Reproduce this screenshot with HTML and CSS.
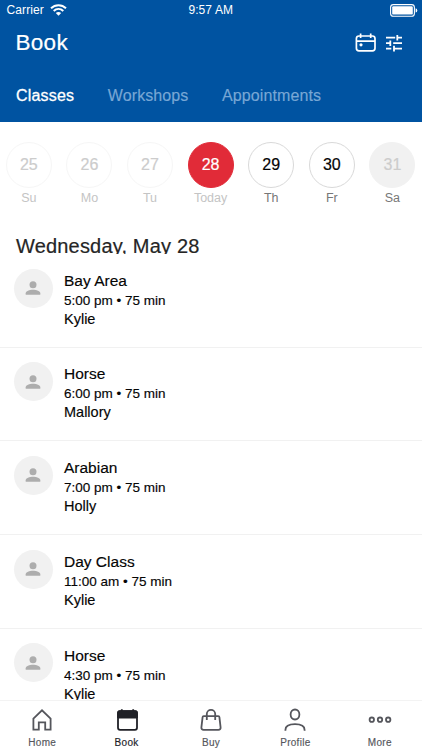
FILE: index.html
```html
<!DOCTYPE html>
<html lang="en">
<head>
<meta charset="utf-8">
<title>Book</title>
<link rel="stylesheet" href="styles.css">
</head>
<body>
<div class="app">
  <header class="header">
    <div class="status">
      <div class="carrier"><span>Carrier</span>
        <svg width="17" height="12" viewBox="0 0 17 12" fill="none" stroke="#fff" stroke-width="2"><path d="M1 4.2C5.2.1 11.8.1 16 4.2M3.7 6.9c2.8-2.6 6.8-2.6 9.6 0"/><path d="M5.8 9.1c1.6-1.4 3.8-1.4 5.4 0L8.5 11.8z" fill="#fff" stroke="none"/></svg>
      </div>
      <span class="clock">9:57 AM</span>
      <svg class="battery" width="28" height="13" viewBox="0 0 28 13"><rect x=".6" y=".6" width="23.8" height="11.6" rx="2.8" fill="none" stroke="#fff" stroke-width="1.1"/><rect x="2.2" y="2.2" width="20.6" height="8.4" rx="1.2" fill="#fff"/><path d="M25.6 4.2q1.7.5 1.7 2.2t-1.7 2.2z" fill="#fff"/></svg>
    </div>
    <div class="titlebar">
      <h1>Book</h1>
      <div class="actions">
        <svg width="22" height="20" viewBox="0 0 22 20" fill="none" stroke="#fff" stroke-width="1.7"><rect x="1.4" y="3" width="18.6" height="14.9" rx="2.6"/><path d="M1.4 8.2H20M5.6.5v4.6M15.7.5v4.6"/><circle cx="6" cy="11.8" r="1.6" fill="#fff" stroke="none"/></svg>
        <svg width="18" height="18" viewBox="0 0 18 18" fill="none" stroke="#fff" stroke-width="1.8"><path d="M1 3.7h9.2M13.2 3.7H17M12.3.9v5.6M1 9.2h4.5M8.2 9.2H17M5.3 6.4V12M1 14.6h5.3M9 14.6h8M9 11.8v5.6"/></svg>
      </div>
    </div>
    <nav class="tabs"><a class="tab active">Classes</a><a class="tab">Workshops</a><a class="tab wide">Appointments</a></nav>
  </header>
  <section class="dates">
    <div class="day past"><b>25</b><span>Su</span></div>
    <div class="day past"><b>26</b><span>Mo</span></div>
    <div class="day past"><b>27</b><span>Tu</span></div>
    <div class="day today"><b>28</b><span>Today</span></div>
    <div class="day"><b>29</b><span>Th</span></div>
    <div class="day"><b>30</b><span>Fr</span></div>
    <div class="day off"><b>31</b><span>Sa</span></div>
  </section>
  <h2>Wednesday, May 28</h2>
  <main class="list">
    <article class="row">
      <div class="avatar"><svg width="16" height="14" viewBox="0 0 16 14"><circle cx="8" cy="3.7" r="3.5"/><path d="M.7 13.7v-1.5C.7 9.9 4.5 8.7 8 8.7s7.3 1.2 7.3 3.5v1.5z"/></svg></div>
      <div class="info"><h3>Bay Area</h3><p class="time">5:00 pm • 75 min</p><p class="name">Kylie</p></div>
    </article>
    <article class="row">
      <div class="avatar"><svg width="16" height="14" viewBox="0 0 16 14"><circle cx="8" cy="3.7" r="3.5"/><path d="M.7 13.7v-1.5C.7 9.9 4.5 8.7 8 8.7s7.3 1.2 7.3 3.5v1.5z"/></svg></div>
      <div class="info"><h3>Horse</h3><p class="time">6:00 pm • 75 min</p><p class="name">Mallory</p></div>
    </article>
    <article class="row">
      <div class="avatar"><svg width="16" height="14" viewBox="0 0 16 14"><circle cx="8" cy="3.7" r="3.5"/><path d="M.7 13.7v-1.5C.7 9.9 4.5 8.7 8 8.7s7.3 1.2 7.3 3.5v1.5z"/></svg></div>
      <div class="info"><h3>Arabian</h3><p class="time">7:00 pm • 75 min</p><p class="name">Holly</p></div>
    </article>
    <article class="row">
      <div class="avatar"><svg width="16" height="14" viewBox="0 0 16 14"><circle cx="8" cy="3.7" r="3.5"/><path d="M.7 13.7v-1.5C.7 9.9 4.5 8.7 8 8.7s7.3 1.2 7.3 3.5v1.5z"/></svg></div>
      <div class="info"><h3>Day Class</h3><p class="time">11:00 am • 75 min</p><p class="name">Kylie</p></div>
    </article>
    <article class="row">
      <div class="avatar"><svg width="16" height="14" viewBox="0 0 16 14"><circle cx="8" cy="3.7" r="3.5"/><path d="M.7 13.7v-1.5C.7 9.9 4.5 8.7 8 8.7s7.3 1.2 7.3 3.5v1.5z"/></svg></div>
      <div class="info"><h3>Horse</h3><p class="time">4:30 pm • 75 min</p><p class="name">Kylie</p></div>
    </article>
  </main>
  <nav class="bottom">
    <a><svg width="24" height="24" viewBox="0 0 24 24"><path d="M3.4 10.7 12 2.3l8.6 8.4v10.9h-5.4v-7.2H8.8v7.2H3.4z"/></svg><span>Home</span></a>
    <a class="current"><svg width="24" height="24" viewBox="0 0 24 24"><path d="M3 9.6h19v10.2q0 2-2 2H5q-2 0-2-2V5.2q0-2 2-2h15q2 0 2 2v5M6.8 1.2v3M18.2 1.2v3"/><path d="M3 9V5.2q0-2 2-2h15q2 0 2 2V9z" fill="#202127"/></svg><span>Book</span></a>
    <a><svg width="24" height="24" viewBox="0 0 24 24"><path d="M4.7 8.1h14.6q1 0 1.1 1l1.2 10.2q.2 2.5-2.2 2.5H4.6q-2.4 0-2.2-2.5L3.6 9.1q.1-1 1.1-1zM7.8 12V6.1a4.2 4.2 0 0 1 8.4 0V12"/></svg><span>Buy</span></a>
    <a><svg width="24" height="24" viewBox="0 0 24 24"><ellipse cx="12" cy="6.5" rx="4.4" ry="5"/><path d="M2.4 22.7v-.8c0-4 4.2-5.7 9.6-5.7s9.6 1.7 9.6 5.7v.8"/></svg><span>Profile</span></a>
    <a><svg width="24" height="24" viewBox="0 0 24 24"><circle cx="3.8" cy="11.7" r="2.2"/><circle cx="12" cy="11.7" r="2.2"/><circle cx="20.2" cy="11.7" r="2.2"/></svg><span>More</span></a>
  </nav>
</div>
</body>
</html>
```
FILE: styles.css
```css
* { box-sizing: border-box; margin: 0; padding: 0; }
body { font-family: "Liberation Sans", Arial, sans-serif; color: #050505; background: #fff; overflow: hidden; }
.app { width: 422px; height: 750px; display: flex; flex-direction: column; overflow: hidden; }
.header { height: 122px; flex: none; background: #0053a1; color: #fff; }
.status { height: 20px; display: grid; grid-template-columns: 1fr auto 1fr; align-items: center; padding: 0 4px 0 6.5px; font-size: 12px; line-height: 20px; letter-spacing: .1px; }
.carrier { display: flex; gap: 6.5px; align-items: center; }
.battery { justify-self: end; }
.clock { letter-spacing: .1px; margin-left: -3px; }
.titlebar { height: 46px; display: flex; justify-content: space-between; padding: 0 19.5px 0 15.5px; }
h1 { font-size: 22.5px; font-weight: 400; line-height: 45px; letter-spacing: .3px; -webkit-text-stroke: .2px; }
.actions { display: flex; gap: 8px; align-items: center; }
.tabs { height: 56px; display: flex; gap: 33.5px; padding: 15px 0 0 16px; font-size: 16px; line-height: 30px; }
.tab { color: #78a7d5; letter-spacing: .1px; -webkit-text-stroke: .15px; }
.active { color: #fff; letter-spacing: .2px; -webkit-text-stroke: .3px #fff; }
.wide { letter-spacing: .12px; }
.dates { height: 110px; flex: none; display: grid; grid-template-columns: repeat(7, 60.6px); justify-content: center; padding: 20px .8px 0 0; }
.day { display: flex; flex-direction: column; align-items: center; }
.day b { width: 46px; height: 46px; border-radius: 50%; border: 1px solid #d9d9d9; font-size: 16px; line-height: 44px; font-weight: 400; text-align: center; -webkit-text-stroke: .2px; }
.day span { font-size: 12.5px; line-height: 16px; margin-top: 2px; color: #777; }
.past b { color: #ccc; border-color: #f6f6f6; }
.past span, .today span { color: #c4c4c4; }
.today b { background: #e12b38; border-color: #e12b38; color: #fff; }
.off b { background: #f1f1f1; border-color: #f1f1f1; color: #ccc; }
h2 { height: 22px; flex: none; overflow: hidden; padding-left: 16px; font-size: 20px; line-height: 29px; font-weight: 400; letter-spacing: .18px; color: #252525; -webkit-text-stroke: .2px; }
.list { flex: 1; min-height: 0; overflow: hidden; }
.row { height: 93.7px; display: flex; gap: 11.5px; padding: 14.5px 14px 0 13.5px; border-bottom: 1px solid #f1f1f1; }
.avatar { width: 39px; height: 39px; flex: none; border-radius: 50%; background: #f1f1f1; display: flex; align-items: center; justify-content: center; fill: #adadad; }
.info { padding-top: 1.3px; }
h3 { font-size: 15.5px; font-weight: 400; line-height: 21px; -webkit-text-stroke: .15px; }
.time { font-size: 13.5px; line-height: 19px; -webkit-text-stroke: .15px; }
.name { font-size: 14.5px; line-height: 19px; -webkit-text-stroke: .15px; }
.bottom { height: 50px; flex: none; display: grid; grid-template-columns: repeat(5, 1fr); border-top: 1px solid #f3f3f3; color: #55565c; }
.bottom a { display: flex; flex-direction: column; align-items: center; padding-top: 7px; font-size: 10px; letter-spacing: .3px; -webkit-text-stroke: .15px; }
.bottom svg { fill: none; stroke: #55565c; stroke-width: 1.8; }
.bottom span { line-height: 14px; margin-top: 4px; }
.bottom .current { color: #202127; }
.current svg { stroke: #202127; }
```
